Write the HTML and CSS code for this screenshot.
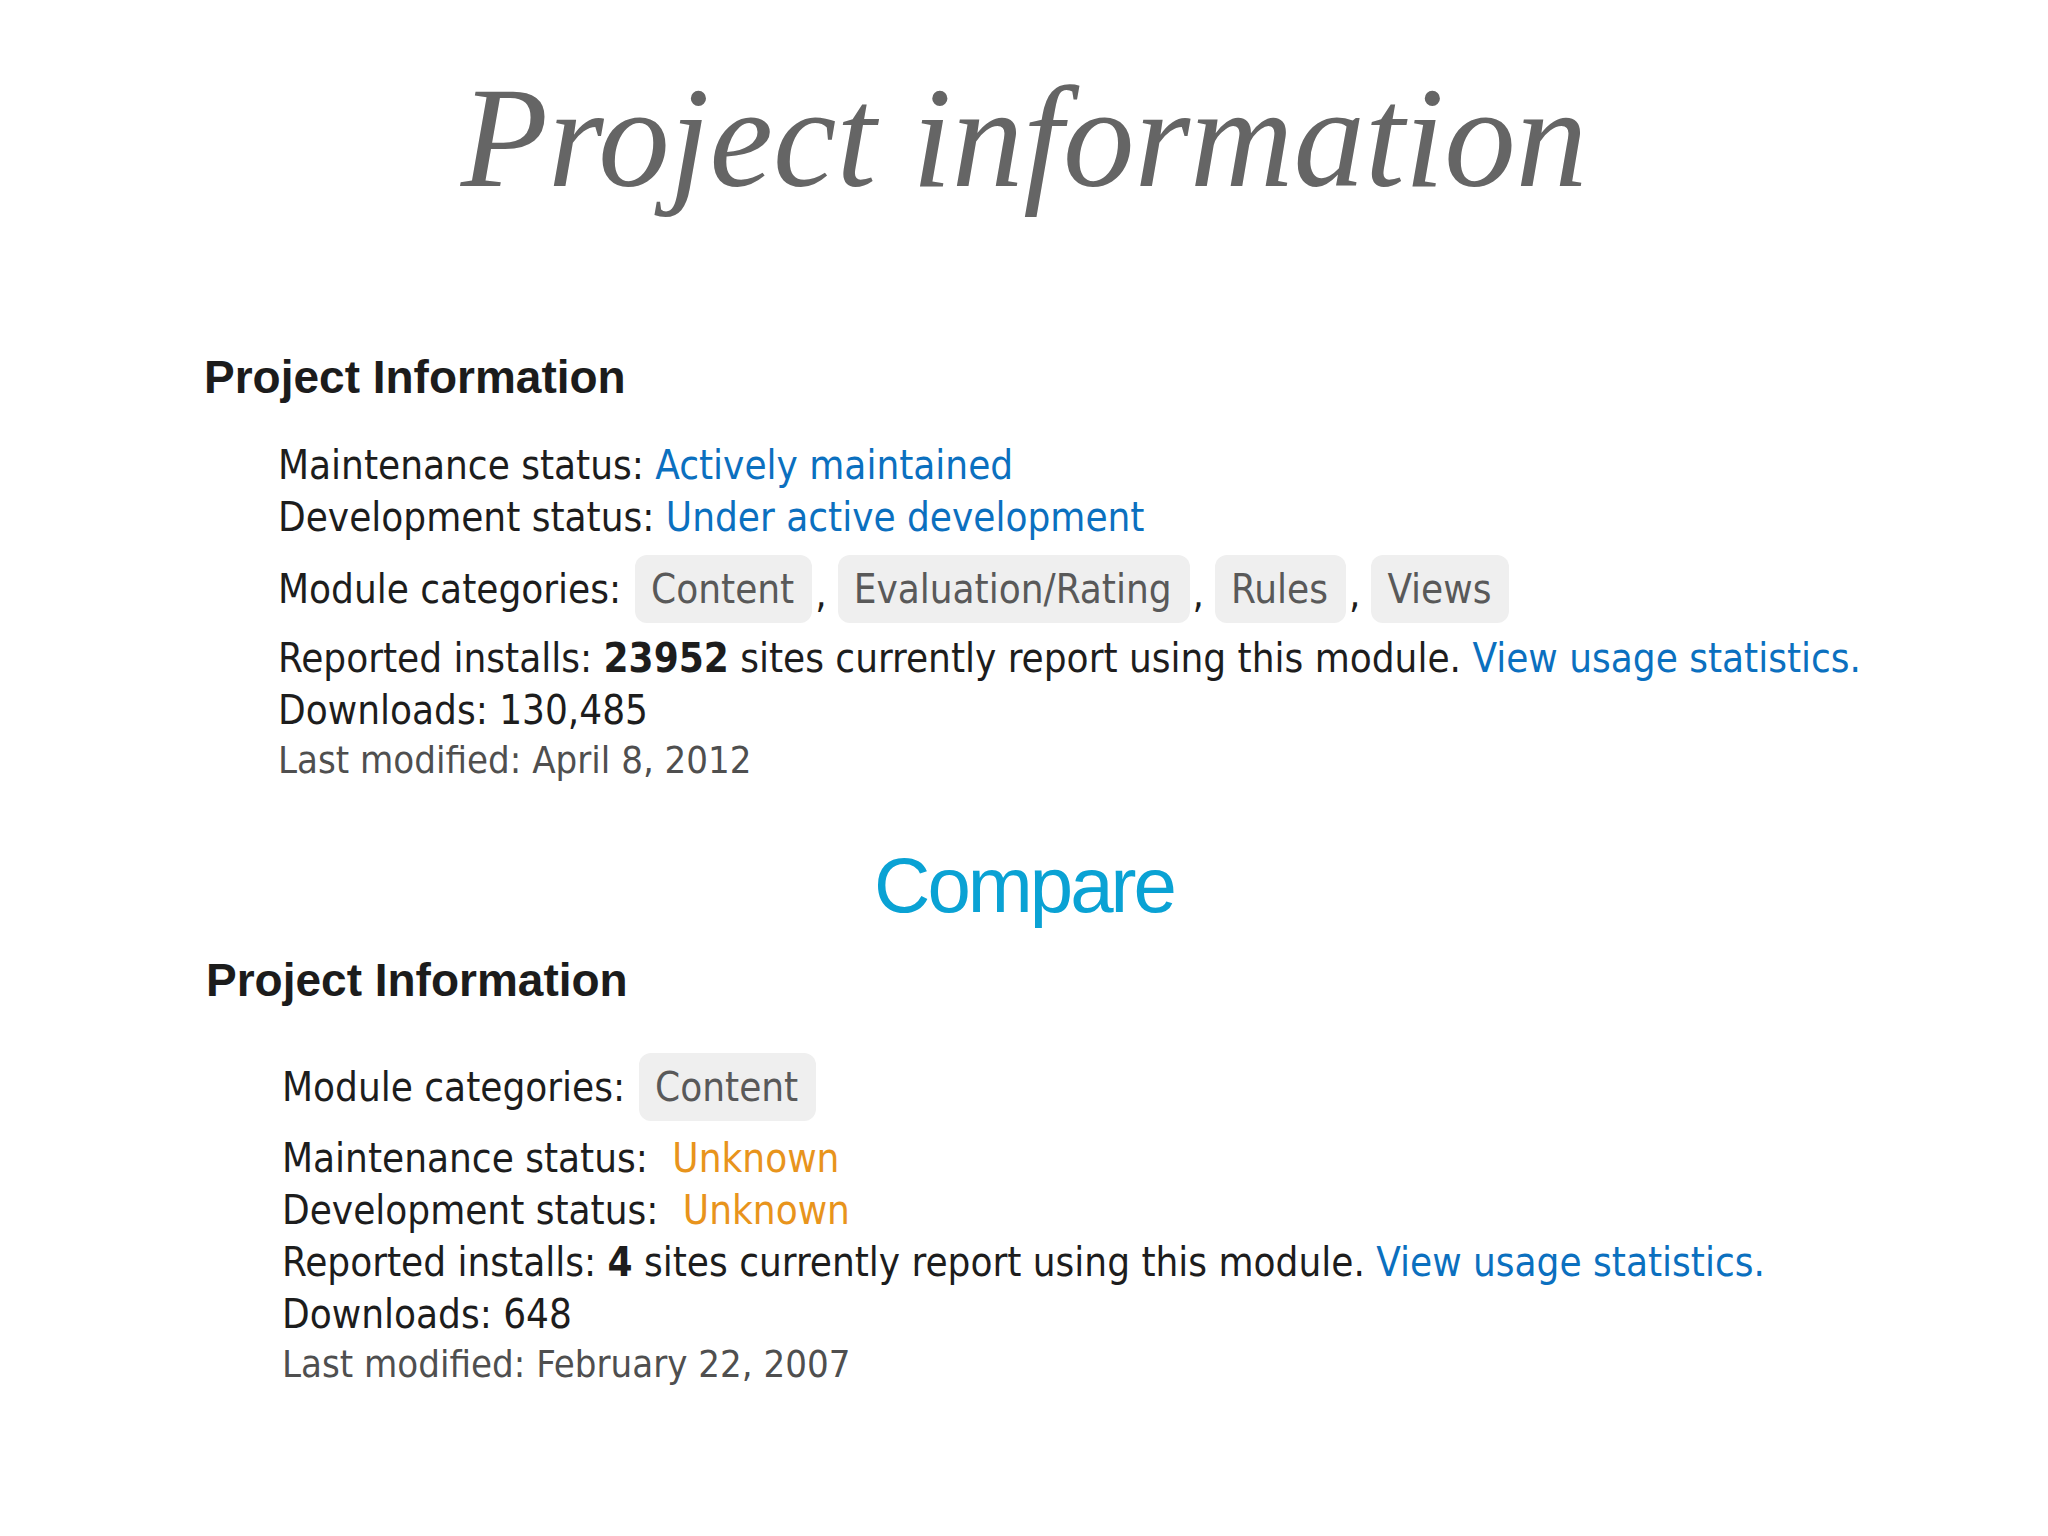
FILE: index.html
```html
<!DOCTYPE html>
<html lang="en">
<head>
<meta charset="utf-8">
<title>Project information</title>
<link rel="stylesheet" href="styles.css">
</head>
<body>
<div class="slide">
  <h1 class="title">Project information</h1>

  <section class="info info-a">
    <h2 class="info-head">Project Information</h2>
    <div class="rows">
      <div class="row">Maintenance status: <a class="link">Actively maintained</a></div>
      <div class="row">Development status: <a class="link">Under active development</a></div>
      <div class="row cats">
        <span class="label">Module categories:</span>
        <span class="tag">Content</span><span class="comma">,</span>
        <span class="tag">Evaluation/Rating</span><span class="comma">,</span>
        <span class="tag">Rules</span><span class="comma">,</span>
        <span class="tag">Views</span>
      </div>
      <div class="row">Reported installs: <b>23952</b> sites currently report using this module. <a class="link">View usage statistics.</a></div>
      <div class="row">Downloads: 130,485</div>
      <div class="row small">Last modified: April 8, 2012</div>
    </div>
  </section>

  <div class="compare">Compare</div>

  <section class="info info-b">
    <h2 class="info-head">Project Information</h2>
    <div class="rows">
      <div class="row cats cats-b">
        <span class="label">Module categories:</span>
        <span class="tag">Content</span>
      </div>
      <div class="row">Maintenance status: <span class="unknown">Unknown</span></div>
      <div class="row">Development status: <span class="unknown">Unknown</span></div>
      <div class="row">Reported installs: <b>4</b> sites currently report using this module. <a class="link">View usage statistics.</a></div>
      <div class="row">Downloads: 648</div>
      <div class="row small">Last modified: February 22, 2007</div>
    </div>
  </section>
</div>
</body>
</html>
```
FILE: styles.css
```css
html, body {
  margin: 0;
  padding: 0;
  background: #ffffff;
}

.slide {
  width: 2048px;
  height: 1536px;
  overflow: hidden;
  display: flex;
  flex-direction: column;
}

.title {
  margin: 67px 0 0 0;
  font-family: "Liberation Serif", serif;
  font-style: italic;
  font-weight: normal;
  font-size: 143px;
  line-height: 143px;
  color: #656565;
  text-align: center;
}

.info {
  display: flex;
  flex-direction: column;
}

.info-a {
  margin-top: 139px;
  padding-left: 204px;
}

.info-b {
  margin-top: 17px;
  padding-left: 206px;
}

.info-head {
  margin: 0;
  font-family: "Liberation Sans", Arial, sans-serif;
  font-weight: bold;
  font-size: 46px;
  line-height: 56px;
  color: #1c1c1c;
}

.rows {
  display: flex;
  flex-direction: column;
  padding-left: 74px;
  margin-top: 34px;
  font-family: "DejaVu Sans Condensed", "DejaVu Sans", sans-serif;
  font-size: 40px;
  color: #1d1d1d;
}

.info-b .rows {
  padding-left: 76px;
  margin-top: 45px;
}

.row {
  line-height: 52px;
  white-space: nowrap;
}

.row b {
  font-weight: bold;
}

.link {
  color: #0b70bf;
  text-decoration: none;
}

.unknown {
  color: #e8941c;
  margin-left: 13px;
}

.cats {
  display: flex;
  align-items: center;
  margin: 12px 0 9px 0;
}

.cats-b {
  margin: 0 0 11px 0;
}

.label {
  margin-right: 14px;
}

.tag {
  display: inline-block;
  background: #efefef;
  color: #595959;
  border-radius: 12px;
  padding: 0 18px 0 16px;
  line-height: 68px;
}

.comma {
  margin: 0 11px 0 3px;
  align-self: flex-end;
  line-height: 52px;
  padding-bottom: 4px;
}

.small {
  font-size: 38px;
  line-height: 48px;
  color: #4f4f4f;
}

.compare {
  margin-top: 51px;
  font-family: "Liberation Sans", Arial, sans-serif;
  font-size: 78px;
  line-height: 100px;
  letter-spacing: -3px;
  color: #0aa2d4;
  text-align: center;
}
```
